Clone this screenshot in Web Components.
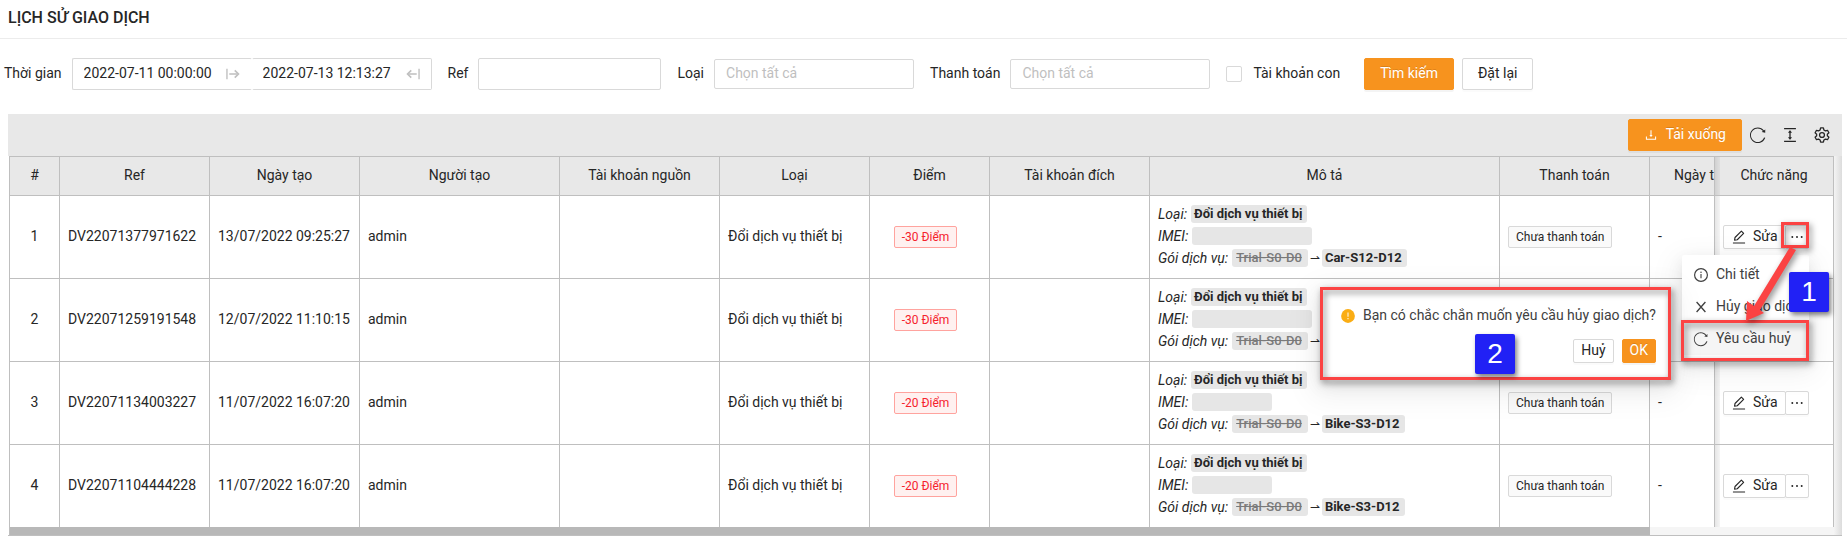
<!DOCTYPE html>
<html lang="vi">
<head>
<meta charset="utf-8">
<title>Lịch sử giao dịch</title>
<style>
html{background:#fff}
body{margin:0;font:14px/22px Roboto,"Noto Sans",sans-serif;color:#262626}
</style>
</head>
<body>
<history-page></history-page>
<script>
const define = (name, html, setup) => customElements.define(name, class extends HTMLElement {
  connectedCallback() {
    if (this.shadowRoot) return;
    const t = document.createElement('template');
    t.innerHTML = typeof html === 'function' ? html(this) : html;
    this.attachShadow({ mode: 'open' }).append(t.content.cloneNode(true));
    if (setup) setup(this);
  }
});

/* ---------- icons ---------- */
const ICONS = {
  reload: '<path d="M909 209l-57 45C771 150 644 84 502 84 256 84 57 283 57 528s200 444 445 444c192 0 355-122 418-292 2-4 0-9-4-10l-54-19c-4-1-8 1-10 5-1 5-3 10-5 15-20 46-47 88-83 123-35 35-77 63-122 83-47 20-97 30-149 30s-101-10-148-30c-46-19-87-47-122-83-35-35-63-77-83-122-20-48-30-97-30-149s10-102 30-149c20-46 48-87 83-123 35-35 76-63 122-83 47-20 96-30 148-30s102 10 149 30c46 20 87 48 122 83 11 11 22 23 32 35l-61 48c-5 4-3 12 3 14l175 43c5 1 10-3 10-8l1-180c-1-6-9-10-14-6z"/>',
  height: '<path d="M840 836H184c-4 0-8 4-8 8v60c0 4 4 8 8 8h656c4 0 8-4 8-8v-60c0-4-4-8-8-8zm0-724H184c-4 0-8 4-8 8v60c0 4 4 8 8 8h656c4 0 8-4 8-8v-60c0-4-4-8-8-8zM611 378c6 0 10-7 6-12L518 239c-3-4-9-4-12 0l-100 127c-4 5-1 12 6 12h62v268h-62c-6 0-10 7-6 12l100 127c3 4 9 4 12 0l99-127c4-5 1-12-6-12h-62V378z"/>',
  gear: '<g fill="none" stroke="currentColor" stroke-width="72"><path stroke-linejoin="round" d="M432 110h160l28 118 88 51 117-34 80 138-89 84v91l89 84-80 138-117-34-88 51-28 118H432l-28-118-88-51-117 34-80-138 89-84v-91l-89-84 80-138 117 34 88-51z"/><circle cx="512" cy="512" r="140"/></g>',
  download: '<path d="M506 662c3 4 9 4 12 0l112-142c4-5 1-13-6-13h-74V168c0-4-4-8-8-8h-60c-4 0-8 4-8 8v339h-74c-7 0-10 8-6 13zM878 626h-60c-4 0-8 4-8 8v154H214V634c0-4-4-8-8-8h-60c-4 0-8 4-8 8v198c0 18 14 32 32 32h684c18 0 32-14 32-32V634c0-4-4-8-8-8z"/>',
  edit: '<path d="M880 864H144c-10 0-20 9-20 20v44h776v-44c0-11-9-20-20-20z"/><path fill="none" stroke="currentColor" stroke-width="72" stroke-linejoin="round" d="M228 716l28-172L664 136l144 144-408 408z"/>',
  info: '<circle cx="512" cy="512" r="410" fill="none" stroke="currentColor" stroke-width="76"/><circle cx="512" cy="336" r="48"/><path d="M476 448h72v272h-72z"/>',
  close: '<path fill="none" stroke="currentColor" stroke-width="84" d="M230 190l564 644M794 190L230 834"/>',
  dots: '<circle cx="212" cy="512" r="62"/><circle cx="512" cy="512" r="62"/><circle cx="812" cy="512" r="62"/>',
  toright: '<path d="M20 120h100v784H20zM240 462h600v100H240z"/><path fill="none" stroke="currentColor" stroke-width="120" d="M640 250l270 262-270 262"/>',
  toleft: '<path d="M904 120h100v784H904zM184 462h600v100H184z"/><path fill="none" stroke="currentColor" stroke-width="120" d="M384 250L114 512l270 262"/>',
  warn: '<circle cx="512" cy="512" r="504"/><path fill="#fff" d="M476 256h72v312h-72z"/><circle cx="512" cy="704" r="48" fill="#fff"/>'
};
define('app-icon', el => `<style>
:host{display:inline-flex;width:14px;height:14px;flex:none}
:host([size=m]){width:16px;height:16px}
:host([size=l]){width:18px;height:18px}
svg{width:100%;height:100%;display:block}
</style><svg viewBox="0 0 1024 1024" fill="currentColor" aria-hidden="true">${ICONS[el.getAttribute('name')]}</svg>`);

/* ---------- buttons ---------- */
define('app-button', `<style>
:host{display:inline-flex;flex:none;color:#262626}
button{display:flex;align-items:center;box-sizing:border-box;height:32px;padding:0 15px;font:inherit;color:inherit;background:#fff;border:1px solid #d9d9d9;border-radius:2px;box-shadow:0 2px 0 rgba(0,0,0,.015);white-space:nowrap}
span{padding-bottom:2px}
slot[name=icon]::slotted(*){margin-right:8px}
:host([primary]){color:#fff}
:host([primary]) button{background:#f7931e;border-color:#f7931e;text-shadow:0 -1px 0 rgba(0,0,0,.12);box-shadow:0 2px 0 rgba(0,0,0,.045)}
:host([small]) button{height:24px;padding:0 7px}
:host([small]) slot[name=icon]::slotted(*){margin-right:6px}
:host([joined]){margin-left:-1px}
:host([joined]) button{padding:0 3px}
:host([joined]) slot[name=icon]::slotted(*){margin-right:0}
</style><button type="button"><slot name="icon"></slot><span><slot></slot></span></button>`, el => {
  if (el.title) el.shadowRoot.querySelector('button').setAttribute('aria-label', el.title);
});

/* ---------- page title ---------- */
define('page-title', `<style>
:host{display:block;border-bottom:1px solid #ececec;padding:7px 8px 9px}
h1{margin:0;font-size:16px;line-height:22px;font-weight:500}
</style><h1><slot></slot></h1>`);

/* ---------- filters ---------- */
define('filter-bar', `<style>
:host{display:block;padding:19px 4px 24px}
form{display:flex;align-items:center;gap:16px}
.field{display:flex;align-items:center;gap:10px}
label{white-space:nowrap;padding-bottom:2px}
.range{display:flex}
.picker{display:flex;align-items:center;box-sizing:border-box;width:180px;height:32px;padding:0 11px;border:1px solid #d9d9d9;border-radius:2px;color:#bfbfbf}
.picker:first-child{border-right-color:transparent}
.picker:last-child{border-left-color:transparent;padding-left:10px}
.picker input{flex:1;min-width:0;border:0;padding:0 0 2px;margin:0;background:none;font:inherit;color:#262626;outline:0}
.text{box-sizing:border-box;width:183px;height:32px;border:1px solid #d9d9d9;border-radius:2px;font:inherit;padding:0 11px}
select{appearance:none;box-sizing:border-box;width:200px;height:30px;border:1px solid #d9d9d9;border-radius:2px;padding:0 11px 2px;background:#fff;font:inherit;color:#bfbfbf}
.check{gap:11px;margin-right:8px}
.check input{appearance:none;box-sizing:border-box;width:16px;height:16px;margin:0;border:1px solid #d9d9d9;border-radius:2px;background:#fff}
.actions{display:flex;gap:8px}
</style>
<form>
<div class="field"><label for="from">Thời gian</label><div class="range">
<div class="picker"><input id="from" value="2022-07-11 00:00:00"><app-icon name="toright"></app-icon></div>
<div class="picker"><input aria-label="Đến" value="2022-07-13 12:13:27"><app-icon name="toleft"></app-icon></div></div></div>
<div class="field"><label for="ref">Ref</label><input class="text" id="ref"></div>
<div class="field"><label for="kind">Loại</label><select id="kind"><option>Chọn tất cả</option></select></div>
<div class="field"><label for="pay">Thanh toán</label><select id="pay"><option>Chọn tất cả</option></select></div>
<div class="field check"><input type="checkbox" id="sub"><label for="sub">Tài khoản con</label></div>
<div class="actions"><app-button primary>Tìm kiếm</app-button><app-button>Đặt lại</app-button></div>
</form>`);

/* ---------- table toolbar ---------- */
define('table-toolbar', `<style>
:host{display:flex;justify-content:flex-end;align-items:center;gap:14px;height:42px;box-sizing:border-box;padding:0 11px;background:#e8e8e8}
app-button{margin-right:-7px}
.tool{border:0;background:none;padding:0;margin:0;color:#262626;display:flex}
</style>
<app-button primary><app-icon slot="icon" name="download"></app-icon>Tải xuống</app-button>
<button class="tool" aria-label="Làm mới"><app-icon size="l" name="reload"></app-icon></button>
<button class="tool" aria-label="Mật độ"><app-icon size="l" name="height"></app-icon></button>
<button class="tool" aria-label="Cài đặt"><app-icon size="l" name="gear"></app-icon></button>`);

/* ---------- tags ---------- */
define('status-tag', `<style>
:host{display:inline-block;box-sizing:border-box;height:22px;padding:0 7px;border:1px solid #d9d9d9;border-radius:2px;background:#fafafa;font-size:12px;line-height:20px;white-space:nowrap;vertical-align:top}
:host([tone=red]){color:#f5222d;background:#fff1f0;border-color:#ffa39e;margin-right:8px}
</style><slot></slot>`);

define('row-detail', el => `<style>
:host{display:block;white-space:nowrap}
div{display:flex;align-items:center;height:22px;gap:4px}
b,s,span{display:block;box-sizing:border-box;height:18px;line-height:18px;border-radius:3px;background:#e6e6e6;padding:0 5px 0 3px;font-size:13px}
b{font-weight:700}
s{color:#7a7a7a;font-weight:500;padding:0 6px 0 4px}
.pair{gap:2px}
.pair i{margin-right:2px}
.short{width:80px}.long{width:120px}
em{font:12px/18px "DejaVu Sans",sans-serif}
</style>
<div><i>Loại:</i><b>Đổi dịch vụ thiết bị</b></div>
<div><i>IMEI:</i><span class="${el.getAttribute('imei')}"></span></div>
<div class="pair"><i>Gói dịch vụ:</i><s>Trial-S0-D0</s><em>⇀</em><b>${el.getAttribute('plan')}</b></div>`);

/* ---------- table ---------- */
const ROWS = [
  ['DV22071377971622', '13/07/2022 09:25:27', '-30 Điểm', 'Car-S12-D12', 'long'],
  ['DV22071259191548', '12/07/2022 11:10:15', '-30 Điểm', 'Car-S12-D12', 'long'],
  ['DV22071134003227', '11/07/2022 16:07:20', '-20 Điểm', 'Bike-S3-D12', 'short'],
  ['DV22071104444228', '11/07/2022 16:07:20', '-20 Điểm', 'Bike-S3-D12', 'short']
];
const WIDTHS = [50, 150, 150, 200, 160, 150, 120, 160, 0, 150, 65, 119];
define('history-table', () => `<style>
:host{display:flex;border-bottom:1px solid #bfbfbf;padding-left:1px}
.main{flex:1;min-width:0;border-left:1px solid #bfbfbf}
table{width:100%;table-layout:fixed;border-collapse:separate;border-spacing:0}
th,td{box-sizing:border-box;padding:7px 8px 9px;border-right:1px solid #bfbfbf;border-bottom:1px solid #bfbfbf;text-align:left;font-weight:400}
th{height:40px;padding:0 8px 2px;background:#e8e8e8;text-align:center;border-top:1px solid #bfbfbf;white-space:nowrap}
td{height:83px}
td.box{padding:8px}
tr:last-child td{border-bottom:0;height:82px}
.c{text-align:center}
th.cut{text-align:left;padding-left:24px;padding-right:0}
.fix{background-image:linear-gradient(90deg,rgba(0,0,0,.1),rgba(0,0,0,.04) 5px,transparent 5px);background-repeat:no-repeat}
.ops{display:flex}
.bar{height:8px;background:#f5f5f5}
.thumb{height:8px;width:calc(100% - 184px);background:#b8b8b8}
.edge{width:8px;background:linear-gradient(90deg,#f4f4f4,#dcdcdc);flex:none}
</style>
<div class="main"><table><colgroup>${WIDTHS.map(w => w ? `<col style="width:${w}px">` : '<col>').join('')}</colgroup>
<thead><tr><th>#</th><th>Ref</th><th>Ngày tạo</th><th>Người tạo</th><th>Tài khoản nguồn</th><th>Loại</th><th>Điểm</th><th>Tài khoản đích</th><th>Mô tả</th><th>Thanh toán</th><th class="cut">Ngày t</th><th class="fix">Chức năng</th></tr></thead>
<tbody>${ROWS.map((r, i) => `<tr><td class="c">${i + 1}</td><td>${r[0]}</td><td>${r[1]}</td><td>admin</td><td></td><td>Đổi dịch vụ thiết bị</td><td class="c box"><status-tag tone="red">${r[2]}</status-tag></td><td></td><td><row-detail plan="${r[3]}" imei="${r[4]}"></row-detail></td><td class="box"><status-tag>Chưa thanh toán</status-tag></td><td>-</td><td class="fix box"><div class="ops"><app-button small><app-icon slot="icon" size="m" name="edit"></app-icon>Sửa</app-button><app-button small joined title="Thêm"><app-icon slot="icon" size="m" name="dots"></app-icon></app-button></div></td></tr>`).join('')}</tbody></table>
<div class="bar"><div class="thumb"></div></div></div><div class="edge"></div>`);

/* ---------- dropdown menu ---------- */
define('action-menu', `<style>
:host{display:block;background:#fff;box-sizing:border-box;border-radius:2px;padding:4px 0;color:#404040;box-shadow:0 3px 6px -4px rgba(0,0,0,.12),0 6px 16px rgba(0,0,0,.08),0 9px 28px 8px rgba(0,0,0,.05)}
ul{list-style:none;margin:0;padding:0}
li{display:flex;align-items:center;gap:7px;height:32px;padding:0 11px;white-space:nowrap}
span{padding-bottom:2px}
.on{background:#f5f5f5}
</style><ul role="menu">
<li role="menuitem"><app-icon size="m" name="info"></app-icon><span>Chi tiết</span></li>
<li role="menuitem"><app-icon size="m" name="close"></app-icon><span>Hủy giao dịch</span></li>
<li role="menuitem" class="on"><app-icon size="m" name="reload"></app-icon><span>Yêu cầu huỷ</span></li></ul>`);

/* ---------- confirm popover ---------- */
define('confirm-popover', `<style>
:host{display:block;box-sizing:border-box;background:#fff;padding:18px 15px 17px 21px;color:#404040;box-shadow:0 6px 16px rgba(0,0,0,.08),0 9px 28px 8px rgba(0,0,0,.06)}
p{display:flex;align-items:center;gap:8px;height:22px;margin:0 0 12px;white-space:nowrap}
span{padding-bottom:2px}
p app-icon{color:#faad14}
.btns{display:flex;justify-content:flex-end;gap:8px}
</style><p><app-icon name="warn"></app-icon><span><slot></slot></span></p>
<div class="btns"><app-button small>Huỷ</app-button><app-button small primary>OK</app-button></div>`);

/* ---------- annotations ---------- */
define('step-badge', `<style>
:host{display:flex;align-items:center;justify-content:center;width:40px;height:40px;border-radius:2px;background:#2121f5;color:#fff;font:28px/40px "Liberation Sans",sans-serif;box-shadow:2px 3px 5px rgba(0,0,0,.5)}
</style><slot></slot>`);
define('mark-frame', `<style>
:host{display:block;box-sizing:border-box;border:3px solid #fb4343;filter:drop-shadow(2px 3px 3px rgba(0,0,0,.5));pointer-events:none}
</style>`);
define('mark-arrow', `<style>
:host{display:block;width:52px;height:76px;filter:drop-shadow(2px 3px 3px rgba(0,0,0,.45));pointer-events:none}
svg{display:block;overflow:visible}
</style><svg width="52" height="76" viewBox="0 0 52 76" fill="#fb4343" aria-hidden="true"><path d="M44 0L50 3 14 63 18 66 0 74 1 54 8 59z"/></svg>`);

/* ---------- page ---------- */
define('history-page', `<style>
:host{display:block;position:relative;min-width:1560px}
.card{margin:0 5px 0 8px}
.over{position:absolute}
.menu{top:255px;right:38px;width:127px}
.pop{top:287px;right:176px;width:351px}
.f1{top:222px;right:38px;width:28px;height:26px}
.f2{top:320px;right:38px;width:128px;height:41px}
.f3{top:287px;right:176px;width:351px;height:93px}
.arrow{top:247px;right:49px}
.b1{top:272px;right:18px}
.b2{top:334px;right:332px}
</style>
<page-title>LỊCH SỬ GIAO DỊCH</page-title>
<filter-bar></filter-bar>
<div class="card"><table-toolbar></table-toolbar><history-table></history-table></div>
<action-menu class="over menu"></action-menu>
<confirm-popover class="over pop">Bạn có chắc chắn muốn yêu cầu hủy giao dịch?</confirm-popover>
<mark-frame class="over f1"></mark-frame>
<mark-frame class="over f2"></mark-frame>
<mark-frame class="over f3"></mark-frame>
<mark-arrow class="over arrow"></mark-arrow>
<step-badge class="over b1">1</step-badge>
<step-badge class="over b2">2</step-badge>`);
</script>
</body>
</html>
